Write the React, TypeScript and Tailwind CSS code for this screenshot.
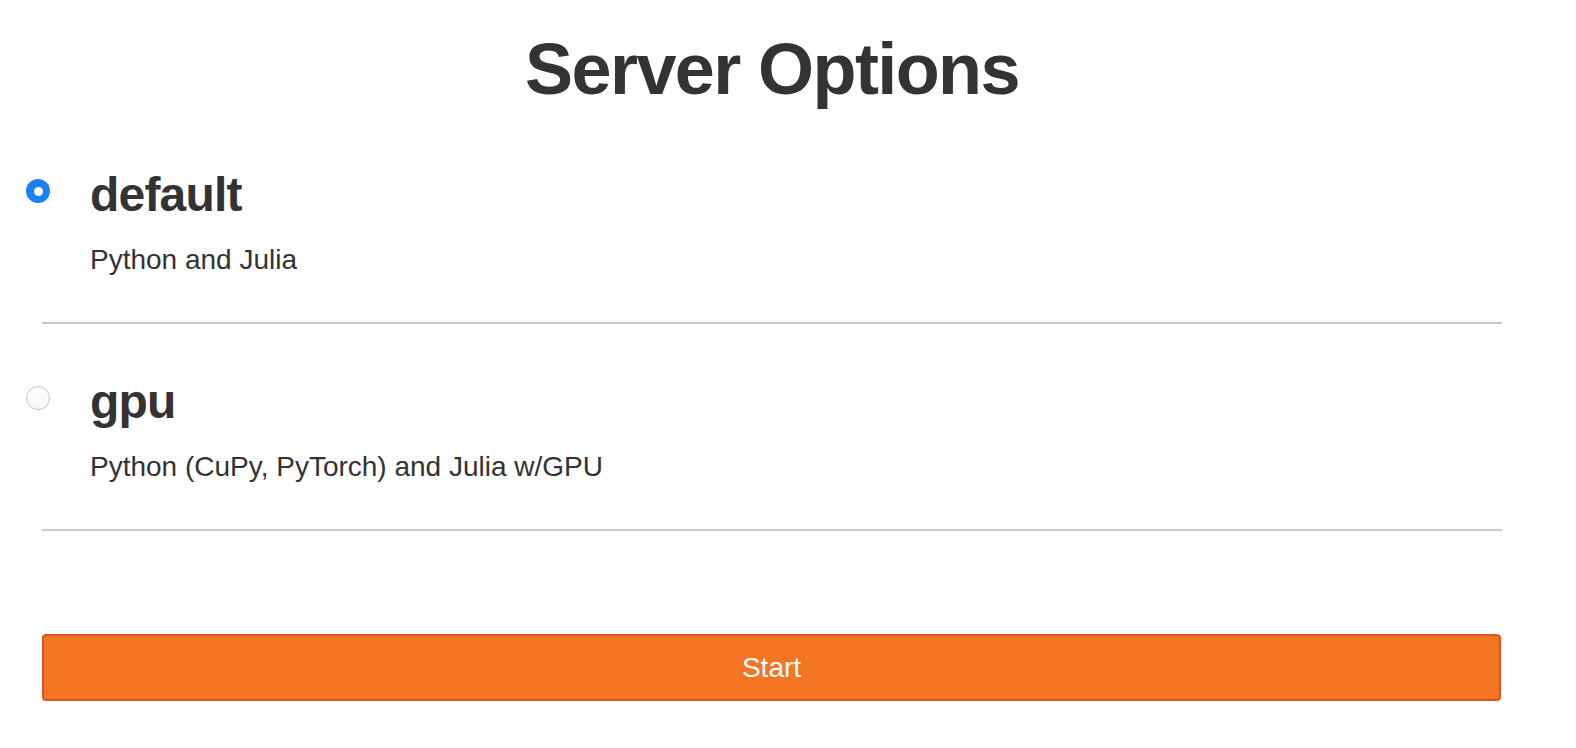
import React, { useState } from "react";

const options = [
  { id: "default", title: "default", desc: "Python and Julia" },
  { id: "gpu", title: "gpu", desc: "Python (CuPy, PyTorch) and Julia w/GPU" },
];

export default function App() {
  const [selected, setSelected] = useState("default");
  return (
    <div
      className="min-h-[748px] w-full bg-white text-[#333333]"
      style={{ fontFamily: '"Liberation Sans", Arial, Helvetica, sans-serif' }}
    >
      <div className="ml-[42px] w-[1460px]">
        <h1 className="mt-[29px] h-[80px] text-center text-[72px] font-bold leading-[80px] tracking-[-1.6px]">
          Server Options
        </h1>
        <div className="mt-[8px]">
          {options.map((o) => {
            const on = selected === o.id;
            return (
              <label
                key={o.id}
                className="relative flex cursor-pointer flex-col border-b-2 border-[#cbcbcb] pt-[52px] pb-[42px]"
                onClick={() => setSelected(o.id)}
              >
                <span className="absolute left-[-16px] top-[62px]">
                  {on ? (
                    <span className="flex h-[24px] w-[24px] items-center justify-center rounded-full bg-[#1b7ff6]">
                      <span className="h-[9px] w-[9px] rounded-full bg-white" />
                    </span>
                  ) : (
                    <span className="block h-[24px] w-[24px] rounded-full border border-[#c4c4c4] bg-gradient-to-b from-white to-[#f6f6f6] shadow-[inset_0_1px_1px_rgba(0,0,0,0.04)]" />
                  )}
                </span>
                <span className="ml-[48px] h-[52px] text-[48px] font-bold leading-[52px] tracking-[-0.8px]">
                  {o.title}
                </span>
                <span className="ml-[48px] mt-[19px] h-[40px] text-[28px] leading-[40px]">
                  {o.desc}
                </span>
              </label>
            );
          })}
        </div>
        <button className="mt-[103px] flex h-[67px] w-[1459px] items-center justify-center rounded-[4px] border-2 border-[#e4521d] bg-[#f37524] text-[28px] text-white">
          Start
        </button>
      </div>
    </div>
  );
}
